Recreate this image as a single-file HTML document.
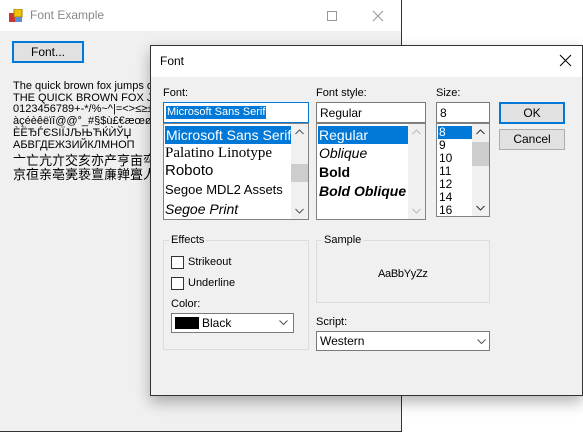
<html><head><style>
*{margin:0;padding:0;box-sizing:border-box}
body{width:583px;height:432px;background:#fff;position:relative;overflow:hidden;font-family:"Liberation Sans",sans-serif;font-size:11px;color:#000}
.a{position:absolute}
.tb{background:#fff;border:1px solid #7a7a7a}
.sel{background:#0078d7;color:#fff}
.btn{background:#e1e1e1;border:1px solid #adadad;text-align:center}
.grp{border:1px solid #dcdcdc}
.lg{background:#f0f0f0;padding:0 2px}
.sb{background:#f0f0f0}
.chk{width:13px;height:13px;border:1px solid #333;background:#fff}
</style></head><body>
<div class="a" style="left:0;top:0;width:402px;height:432px;background:#f0f0f0;border-right:1px solid #333;border-bottom:1px solid #333"></div>
<div class="a" style="left:0;top:0;width:401px;height:31px;background:#fff"></div>
<svg class="a" style="left:9px;top:9px" width="14" height="14"><rect x="0" y="4" width="6" height="9" fill="#c33"/><rect x="5" y="0" width="8" height="8" fill="#f2c200" stroke="#a08000"/><rect x="6" y="8" width="7" height="5" fill="#5b8fd6"/></svg>
<div class="a" style="left:30px;top:8px;font-size:12px;color:#888">Font Example</div>
<svg class="a" style="left:326px;top:10px" width="12" height="12"><rect x="1.5" y="1.5" width="9" height="9" fill="none" stroke="#999"/></svg>
<svg class="a" style="left:372px;top:10px" width="12" height="12"><path d="M1 1L11 11M11 1L1 11" stroke="#999"/></svg>
<div class="a btn" style="left:12px;top:41px;width:72px;height:22px;border:2px solid #0078d7;line-height:18px;font-size:12px">Font...</div>
<div class="a" style="left:13px;top:81px;font-size:11px;line-height:11.7px;white-space:nowrap;font-family:'Liberation Sans','Noto Sans CJK SC',sans-serif">The quick brown fox jumps over<br>THE QUICK BROWN FOX JUMPS<br>0123456789+-*/%~^|=&lt;&gt;≤≥±÷<br>àçéèêëïî@@°_#§$ù£€æœøå<br>ÈЁЂЃЄЅІЇЈЉЊЋЌЍЎЏ<br>АБВГДЕЖЗИЙКЛМНОП<br><span style="display:inline-block;margin-top:3px;font-size:13px;line-height:14px">亠亡亢亣交亥亦产亨亩亪亭<br>京亱亲亳亴亵亶亷亸亹人</span></div>
<div class="a" style="left:150px;top:45px;width:433px;height:351px;background:#f0f0f0;border:1px solid #333;box-shadow:0 6px 14px rgba(0,0,0,.3)"></div>
<div class="a" style="left:151px;top:46px;width:431px;height:31px;background:#fff"></div>
<div class="a" style="left:160px;top:54px;font-size:12px">Font</div>
<svg class="a" style="left:559px;top:54px" width="13" height="13"><path d="M1 1L12 12M12 1L1 12" stroke="#000"/></svg>

<div class="a" style="left:163px;top:87px">Font:</div>
<div class="a tb" style="left:163px;top:102px;width:146px;height:21px;border-color:#0078d7"><span class="sel" style="position:absolute;left:2px;top:3px;font-size:11px;line-height:13px;padding:0 1px">Microsoft Sans Serif</span></div>
<div class="a tb" style="left:163px;top:123px;width:146px;height:97px;border-color:#828282;overflow:hidden">
 <div class="a sel" style="left:1px;top:2px;width:126px;height:18px;font-size:14px;line-height:18px;padding-left:1px;white-space:nowrap;overflow:hidden">Microsoft Sans Serif</div>
 <div class="a" style="left:1px;top:20px;font-family:'Liberation Serif',serif;font-size:15px;line-height:18px;white-space:nowrap">Palatino Linotype</div>
 <div class="a" style="left:1px;top:38px;font-size:15px;line-height:18px">Roboto</div>
 <div class="a" style="left:1px;top:57px;font-size:13px;line-height:18px;white-space:nowrap">Segoe MDL2 Assets</div>
 <div class="a" style="left:1px;top:76px;font-size:14px;line-height:18px;font-style:italic;white-space:nowrap">Segoe Print</div>
 <div class="a sb" style="left:127px;top:0;width:17px;height:95px"></div>
 <div class="a" style="left:127px;top:40px;width:17px;height:18px;background:#cdcdcd"></div>
 <svg class="a" style="left:131px;top:5px" width="9" height="6"><path d="M0.5 5L4.5 1L8.5 5" stroke="#555" fill="none"/></svg>
 <svg class="a" style="left:131px;top:84px" width="9" height="6"><path d="M0.5 1L4.5 5L8.5 1" stroke="#555" fill="none"/></svg>
</div>

<div class="a" style="left:316px;top:87px">Font style:</div>
<div class="a tb" style="left:316px;top:102px;width:110px;height:21px;padding:3px 3px;font-size:12px">Regular</div>
<div class="a tb" style="left:316px;top:123px;width:110px;height:97px;border-color:#828282;overflow:hidden;font-size:14px;line-height:18px">
 <div class="a sel" style="left:1px;top:2px;width:90px;height:18px;padding-left:1px">Regular</div>
 <div class="a" style="left:2px;top:20px;font-style:italic">Oblique</div>
 <div class="a" style="left:2px;top:39px;font-weight:bold">Bold</div>
 <div class="a" style="left:2px;top:58px;font-weight:bold;font-style:italic;white-space:nowrap">Bold Oblique</div>
 <div class="a sb" style="left:91px;top:0;width:17px;height:95px"></div>
 <svg class="a" style="left:95px;top:5px" width="9" height="6"><path d="M0.5 5L4.5 1L8.5 5" stroke="#bbb" fill="none"/></svg>
 <svg class="a" style="left:95px;top:84px" width="9" height="6"><path d="M0.5 1L4.5 5L8.5 1" stroke="#bbb" fill="none"/></svg>
</div>

<div class="a" style="left:436px;top:87px">Size:</div>
<div class="a tb" style="left:436px;top:102px;width:54px;height:21px;padding:3px 3px;font-size:12px">8</div>
<div class="a tb" style="left:436px;top:123px;width:54px;height:94px;border-color:#828282;overflow:hidden;font-size:12px;line-height:13px">
 <div class="a sel" style="left:1px;top:2px;width:34px;height:13px;padding-left:1px">8</div>
 <div class="a" style="left:2px;top:15px">9<br>10<br>11<br>12<br>14<br>16</div>
 <div class="a sb" style="left:35px;top:0;width:17px;height:92px"></div>
 <div class="a" style="left:35px;top:18px;width:17px;height:24px;background:#cdcdcd"></div>
 <svg class="a" style="left:39px;top:5px" width="9" height="6"><path d="M0.5 5L4.5 1L8.5 5" stroke="#333" fill="none"/></svg>
 <svg class="a" style="left:39px;top:81px" width="9" height="6"><path d="M0.5 1L4.5 5L8.5 1" stroke="#333" fill="none"/></svg>
</div>

<div class="a btn" style="left:499px;top:102px;width:66px;height:22px;border:2px solid #0078d7;line-height:18px;font-size:12px">OK</div>
<div class="a btn" style="left:499px;top:129px;width:66px;height:21px;line-height:19px;font-size:12px">Cancel</div>

<div class="a grp" style="left:163px;top:240px;width:146px;height:110px"></div>
<div class="a lg" style="left:169px;top:234px">Effects</div>
<div class="a chk" style="left:171px;top:256px"></div>
<div class="a" style="left:188px;top:256px">Strikeout</div>
<div class="a chk" style="left:171px;top:277px"></div>
<div class="a" style="left:188px;top:277px">Underline</div>
<div class="a" style="left:171px;top:298px">Color:</div>
<div class="a tb" style="left:171px;top:313px;width:123px;height:20px"><div class="a" style="left:3px;top:3px;width:24px;height:12px;background:#000"></div><div class="a" style="left:30px;top:2px;font-size:12px">Black</div><svg class="a" style="left:107px;top:6px" width="9" height="6"><path d="M0.5 0.5L4.5 4.5L8.5 0.5" stroke="#555" fill="none"/></svg></div>

<div class="a grp" style="left:316px;top:240px;width:174px;height:63px"></div>
<div class="a lg" style="left:322px;top:234px">Sample</div>
<div class="a" style="left:378px;top:268px;letter-spacing:-0.3px">AaBbYyZz</div>
<div class="a" style="left:316px;top:316px">Script:</div>
<div class="a tb" style="left:316px;top:331px;width:174px;height:20px"><div class="a" style="left:3px;top:2px;font-size:12px">Western</div><svg class="a" style="left:160px;top:7px" width="9" height="6"><path d="M0.5 0.5L4.5 4.5L8.5 0.5" stroke="#555" fill="none"/></svg></div>
</body></html>
